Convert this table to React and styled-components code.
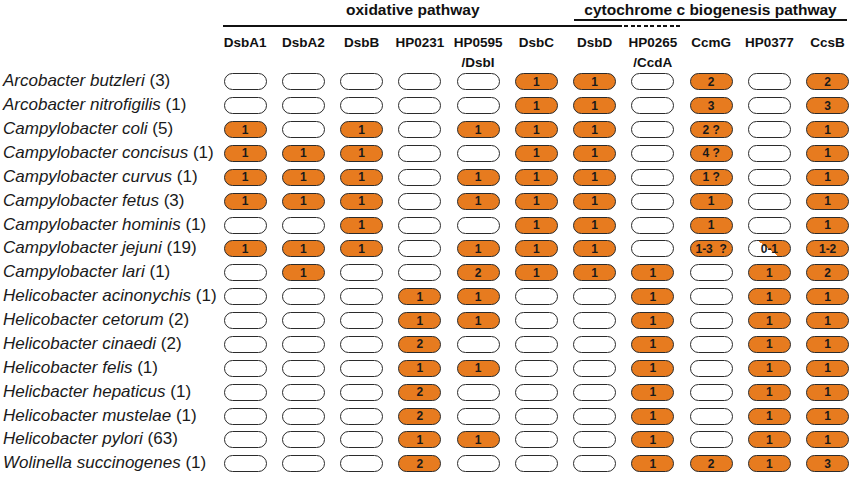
import React from "react";
import styled, { createGlobalStyle } from "styled-components";

const ORANGE = "#E77B1F";
const COLS = "216px repeat(11, 58.25px)";

const GlobalStyle = createGlobalStyle`
  html, body {
    margin: 0;
    padding: 0;
    background: #ffffff;
    overflow: hidden;
  }
  body {
    font-family: "Liberation Sans", Arial, sans-serif;
    color: #111;
  }
`;

const Figure = styled.div`
  width: 851px;
  height: 477px;
  background: #fff;
`;

const TitleRow = styled.div`
  display: flex;
  align-items: flex-start;
  padding-left: 223px;
`;

const OxTitle = styled.div`
  box-sizing: border-box;
  width: 351px;
  padding-left: 123px;
  font-size: 15.5px;
  font-weight: bold;
  line-height: 19px;
  white-space: nowrap;
`;

const CytoTitle = styled.div`
  width: 273px;
  text-align: center;
  font-size: 15.5px;
  font-weight: bold;
  line-height: 19px;
  white-space: nowrap;
  border-bottom: 2px solid #111;
`;

const RuleRow = styled.div`
  display: flex;
  gap: 2px;
  padding-left: 223px;
  margin-top: 3.75px;
`;

const SolidRule = styled.div`
  width: 399px;
  height: 2.5px;
  background: #111;
`;

const DashedRule = styled.div`
  width: 58px;
  height: 2.5px;
  background: repeating-linear-gradient(
    to right,
    #111 0 4px,
    transparent 4px 6.5px
  );
`;

const HeadRow = styled.div`
  display: grid;
  grid-template-columns: ${COLS};
  margin-top: 6px;
  height: 40px;
`;

const ColHead = styled.div`
  grid-column: ${(p) => p.$col + 2};
  text-align: center;
  font-size: 13.5px;
  font-weight: bold;
  line-height: 20px;
  white-space: pre-line;
  color: #111;
`;

const DataRow = styled.div`
  display: grid;
  grid-template-columns: ${COLS};
  align-items: start;
  height: 23.875px;
`;

const Label = styled.div`
  padding-left: 3px;
  font-size: 17px;
  line-height: 16px;
  white-space: nowrap;
  color: #1a1a1a;

  em {
    font-style: italic;
  }
`;

const Pill = styled.div`
  justify-self: center;
  box-sizing: border-box;
  width: 43px;
  height: 17px;
  border: 1.7px solid #2b2b2b;
  border-radius: 8.5px;
  background: ${(p) =>
    p.$kind === "half"
      ? `linear-gradient(38deg, #ffffff 47.7%, ${ORANGE} 47.7%)`
      : p.$kind === "full"
      ? ORANGE
      : "#ffffff"};
  display: flex;
  align-items: center;
  justify-content: center;
  font-size: 12px;
  font-weight: bold;
  line-height: 14px;
  color: #1a1a1a;
  white-space: pre;
`;

const columns = [
  "DsbA1",
  "DsbA2",
  "DsbB",
  "HP0231",
  "HP0595\n/DsbI",
  "DsbC",
  "DsbD",
  "HP0265\n/CcdA",
  "CcmG",
  "HP0377",
  "CcsB",
];

const _ = null;
const rows = [
  ["Arcobacter butzleri", "(3)", [_, _, _, _, _, "1", "1", _, "2", _, "2"]],
  ["Arcobacter nitrofigilis", "(1)", [_, _, _, _, _, "1", "1", _, "3", _, "3"]],
  ["Campylobacter coli", "(5)", ["1", _, "1", _, "1", "1", "1", _, "2 ?", _, "1"]],
  ["Campylobacter concisus", "(1)", ["1", "1", "1", _, _, "1", "1", _, "4 ?", _, "1"]],
  ["Campylobacter curvus", "(1)", ["1", "1", "1", _, "1", "1", "1", _, "1 ?", _, "1"]],
  ["Campylobacter fetus", "(3)", ["1", "1", "1", _, "1", "1", "1", _, "1", _, "1"]],
  ["Campylobacter hominis", "(1)", [_, _, "1", _, _, "1", "1", _, "1", _, "1"]],
  [
    "Campylobacter jejuni",
    "(19)",
    ["1", "1", "1", _, "1", "1", "1", _, "1-3  ?", { half: "0-1" }, "1-2"],
  ],
  ["Campylobacter lari", "(1)", [_, "1", _, _, "2", "1", "1", "1", _, "1", "2"]],
  ["Helicobacter acinonychis", "(1)", [_, _, _, "1", "1", _, _, "1", _, "1", "1"]],
  ["Helicobacter cetorum", "(2)", [_, _, _, "1", "1", _, _, "1", _, "1", "1"]],
  ["Helicobacter cinaedi", "(2)", [_, _, _, "2", _, _, _, "1", _, "1", "1"]],
  ["Helicobacter felis", "(1)", [_, _, _, "1", "1", _, _, "1", _, "1", "1"]],
  ["Helicbacter hepaticus", "(1)", [_, _, _, "2", _, _, _, "1", _, "1", "1"]],
  ["Helicobacter mustelae", "(1)", [_, _, _, "2", _, _, _, "1", _, "1", "1"]],
  ["Helicobacter pylori", "(63)", [_, _, _, "1", "1", _, _, "1", _, "1", "1"]],
  ["Wolinella succinogenes", "(1)", [_, _, _, "2", _, _, _, "1", "2", "1", "3"]],
];

function Cell({ value }) {
  if (value === null) return <Pill $kind="empty" />;
  if (typeof value === "object") return <Pill $kind="half">{value.half}</Pill>;
  return <Pill $kind="full">{value}</Pill>;
}

export default function App() {
  return (
    <>
      <GlobalStyle />
      <Figure>
        <TitleRow>
          <OxTitle>oxidative pathway</OxTitle>
          <CytoTitle>cytochrome c biogenesis pathway</CytoTitle>
        </TitleRow>
        <RuleRow>
          <SolidRule />
          <DashedRule />
        </RuleRow>
        <HeadRow>
          {columns.map((c, i) => (
            <ColHead key={c} $col={i}>
              {c}
            </ColHead>
          ))}
        </HeadRow>
        {rows.map(([name, count, vals]) => (
          <DataRow key={name}>
            <Label>
              <em>{name}</em> {count}
            </Label>
            {vals.map((v, i) => (
              <Cell key={i} value={v} />
            ))}
          </DataRow>
        ))}
      </Figure>
    </>
  );
}
